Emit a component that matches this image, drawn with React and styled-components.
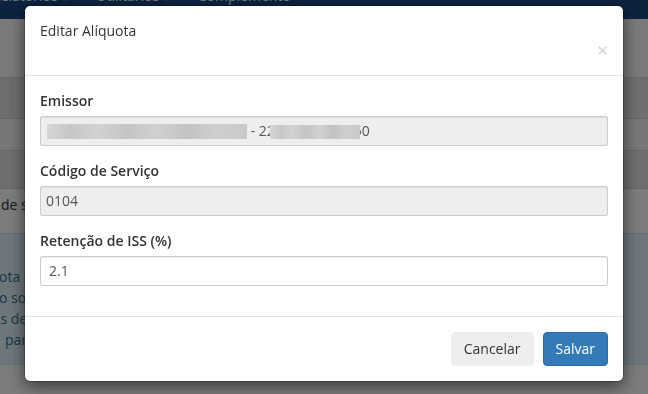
import React from 'react';
import styled, { createGlobalStyle } from 'styled-components';

const GlobalStyle = createGlobalStyle`
  html, body {
    margin: 0;
    padding: 0;
    height: 100%;
    overflow: hidden;
  }
  body {
    font-family: "Open Sans", "Liberation Sans", sans-serif;
    font-size: 14px;
    line-height: 1.42857;
    color: #333;
    background: #fff;
  }
  * { box-sizing: border-box; }
`;

// the page behind the modal
const Page = styled.div`
  width: 100%;
  height: 394px;
  background: #f8f8f8;
`;

const TopNav = styled.nav`
  height: 19px;
  background: #19467f;
  display: flex;
  gap: 28px;
  padding-left: 0;
  overflow: hidden;
  margin-left: -8px;
`;

const NavItem = styled.span`
  color: #f2f4f7;
  font-size: 14px;
  line-height: 20px;
  margin-top: -14px;
  white-space: nowrap;
`;

const Band = styled.div`
  height: ${p => p.h}px;
  background: ${p => p.bg};
  border-top: ${p => (p.line ? '1px solid #cfcfcf' : 'none')};
  display: flex;
`;

const Cell = styled.div`
  width: 12px;
  border-right: 1px solid #cfcfcf;
  background: #dcdcdc;
`;

const RowText = styled.div`
  padding-top: 6px;
  padding-left: 1px;
  color: #333;
  font-size: 14px;
  white-space: nowrap;
`;

const Alert = styled.div`
  height: 132px;
  background: #d9edf7;
  border-top: 1px solid #bce8f1;
  border-bottom: 1px solid #bce8f1;
  color: #31708f;
  padding-top: 32px;
  font-size: 14px;
  line-height: 21px;
  white-space: nowrap;
`;

const AlertLine = styled.div`
  margin-left: ${p => p.indent || 0}px;
`;

// overlay layers
const Backdrop = styled.div`
  position: fixed;
  inset: 0;
  background: rgba(0, 0, 0, 0.5);
`;

const ModalLayer = styled.div`
  position: fixed;
  inset: 0;
  overflow: hidden;
`;

const Dialog = styled.div`
  width: 600px;
  margin: 5px auto 0;
  background: #fff;
  border: 1px solid rgba(0, 0, 0, 0.2);
  border-radius: 6px;
  box-shadow: 0 5px 15px rgba(0, 0, 0, 0.5);
  background-clip: padding-box;
`;

const Header = styled.div`
  padding: 15px;
  border-bottom: 1px solid #e5e5e5;
  &::after { content: ""; display: table; clear: both; }
`;

const Title = styled.h4`
  margin: 0;
  font-size: 14px;
  font-weight: 400;
  line-height: 20px;
  color: #333;
`;

const Close = styled.button`
  float: right;
  margin-top: -1px;
  padding: 0;
  border: 0;
  background: transparent;
  font-family: "Open Sans", "Liberation Sans", sans-serif;
  font-size: 19px;
  font-weight: 400;
  line-height: 20px;
  color: #000;
  opacity: 0.2;
  cursor: pointer;
`;

const Body = styled.div`
  padding: 15px;
`;

const FormGroup = styled.div`
  margin-bottom: 15px;
`;

const Label = styled.label`
  display: inline-block;
  margin-bottom: 5px;
  font-weight: 600;
  font-size: 14px;
  line-height: 20px;
  color: #333;
`;

const Field = styled.div`
  height: 30px;
  display: flex;
  align-items: center;
  padding: 0 ${p => p.pad || 6}px;
  border: 1px solid #ccc;
  border-radius: 2px;
  background: ${p => (p.disabled ? '#eeeeee' : '#fff')};
  box-shadow: inset 0 1px 1px rgba(0, 0, 0, 0.075);
  color: #555;
  font-size: 14px;
  white-space: pre;
`;

const Redacted = styled.span`
  position: relative;
  display: inline-block;
  width: ${p => p.w}px;
  height: ${p => p.h}px;
  margin-top: ${p => p.top || 0}px;
  margin-left: ${p => p.ml || 0}px;
  margin-right: ${p => p.mr || 0}px;
  background: linear-gradient(90deg, #d6d6d6 0%, #c6c6c6 12%, #d2d2d2 25%, #c4c4c4 40%, #d0d0d0 55%, #c2c2c2 70%, #cfcfcf 85%, #c9c9c9 100%);
  filter: blur(0.7px);
`;

const Footer = styled.div`
  padding: 15px;
  border-top: 1px solid #e5e5e5;
  display: flex;
  justify-content: flex-end;
  gap: 9px;
`;

const Button = styled.button`
  height: 34px;
  padding: 6px 12px;
  font-family: "Open Sans", "Liberation Sans", sans-serif;
  font-size: 14px;
  line-height: 20px;
  border-radius: 4px;
  border: 1px solid ${p => (p.primary ? '#2e6da4' : '#eeeeee')};
  background: ${p => (p.primary ? '#337ab7' : '#eeeeee')};
  color: ${p => (p.primary ? '#fff' : '#333')};
  cursor: pointer;
`;

export default function App() {
  return (
    <>
      <GlobalStyle />
      <Page>
        <TopNav>
          <NavItem>Relatórios ▾</NavItem>
          <NavItem>Utilitários ▾</NavItem>
          <NavItem>Complemento</NavItem>
        </TopNav>
        <Band h={58} bg="#f4f4f4" />
        <Band h={41} bg="#dedede" line>
          <Cell />
        </Band>
        <Band h={32} bg="#eeeeee" line />
        <Band h={38} bg="#dedede" line />
        <Band h={45} bg="#f8f8f8" line>
          <RowText>de serviço</RowText>
        </Band>
        <Alert>
          <AlertLine indent={-1}>ota para o serviço</AlertLine>
          <AlertLine indent={-1}>o software</AlertLine>
          <AlertLine indent={-3}>is de cálculo</AlertLine>
          <AlertLine indent={5}>para</AlertLine>
        </Alert>
      </Page>

      <Backdrop />
      <ModalLayer>
        <Dialog>
          <Header>
            <Title>Editar Alíquota</Title>
            <Close aria-label="Fechar">×</Close>
          </Header>
          <Body>
            <FormGroup>
              <Label>Emissor</Label>
              <Field disabled pad={6}>
                <Redacted w={200} h={15} />
                {' - 22'}
                <Redacted w={90} h={14} top={2} ml={-5} mr={-6} />
                50
              </Field>
            </FormGroup>
            <FormGroup>
              <Label>Código de Serviço</Label>
              <Field disabled pad={5}>0104</Field>
            </FormGroup>
            <FormGroup>
              <Label>Retenção de ISS (%)</Label>
              <Field pad={8}>2.1</Field>
            </FormGroup>
          </Body>
          <Footer>
            <Button>Cancelar</Button>
            <Button primary>Salvar</Button>
          </Footer>
        </Dialog>
      </ModalLayer>
    </>
  );
}
